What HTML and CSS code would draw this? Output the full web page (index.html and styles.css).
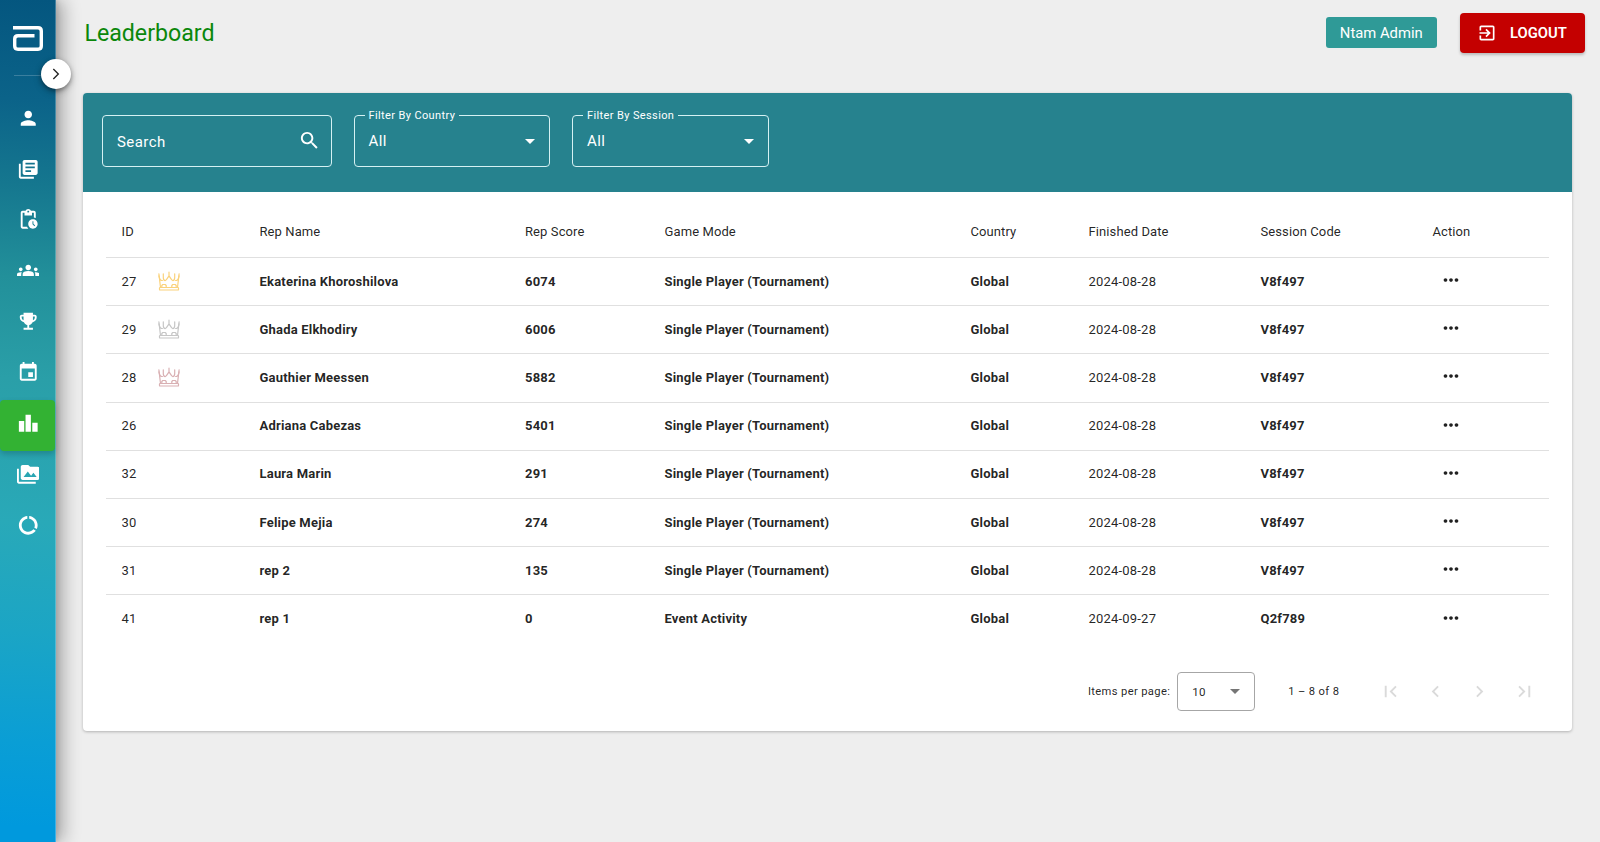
FILE: index.html
```html
<!DOCTYPE html>
<html lang="en">
<head>
<meta charset="utf-8">
<title>Leaderboard</title>
<link rel="stylesheet" href="styles.css">
</head>
<body>
<svg width="0" height="0" class="defs" aria-hidden="true">
  <symbol id="crown" viewBox="0 0 22 20">
    <g fill="none" stroke="currentColor" stroke-width="1.200" stroke-linejoin="round" stroke-linecap="round">
      <rect x="1.500" y="16.500" width="19" height="2.500" rx="0.600"/>
      <path d="M.9 2.800 2.500 16.500M21.100 2.800 19.500 16.500"/>
      <path d="M.9 4.800c.5 3 1.900 4.800 3.500 4.700M21.100 4.800c-.5 3-1.900 4.800-3.500 4.700"/>
      <path d="M5.300 2.800v3.700c0 2 .8 3 1.900 3.100 1.200 0 2.200-2.400 3.800-4.800V1.200v3.600c1.600 2.400 2.600 4.800 3.800 4.800 1.100-.1 1.900-1.100 1.900-3.100V2.800"/>
      <path d="M3.800 16.500v-2l1-1h2.400l1 1v2M18.200 16.500v-2l-1-1h-2.400l-1 1v2"/>
    </g>
  </symbol>
  <symbol id="dots" viewBox="0 0 24 24"><path d="M6 10c-1.100 0-2 .9-2 2s.9 2 2 2 2-.9 2-2-.9-2-2-2zm12 0c-1.100 0-2 .9-2 2s.9 2 2 2 2-.9 2-2-.9-2-2-2zm-6 0c-1.100 0-2 .9-2 2s.9 2 2 2 2-.9 2-2-.9-2-2-2z"/></symbol>
</svg>
<div class="app">
  <aside class="sidebar">
    <svg class="logo" viewBox="0 0 30 25"><path d="M0 1.700H25Q28.300 1.700 28.300 5V20Q28.300 23.200 25 23.200H5Q1.700 23.200 1.700 20V13Q1.700 9.800 5 9.800H21.500" fill="none" stroke="#fff" stroke-width="3.400"/></svg>
    <div class="rule"></div>
    <button class="toggle" aria-label="Expand menu"><svg viewBox="0 0 24 24"><path d="M8 4.500 15.500 12l-7.500 7.500" fill="none" stroke="#222" stroke-width="2"/></svg></button>
    <nav class="nav">
      <a class="item"><svg viewBox="0 0 24 24"><path d="M12 12c2.210 0 4-1.790 4-4s-1.790-4-4-4-4 1.790-4 4 1.790 4 4 4zm0 2c-2.670 0-8 1.340-8 4v2h16v-2c0-2.660-5.330-4-8-4z"/></svg></a>
      <a class="item"><svg viewBox="0 0 24 24"><path d="M4 6H2v14c0 1.100.9 2 2 2h14v-2H4V6zm16-4H8c-1.100 0-2 .9-2 2v12c0 1.100.9 2 2 2h12c1.100 0 2-.9 2-2V4c0-1.100-.9-2-2-2zm-1 9H9V9h10v2zm-4 4H9v-2h6v2zm4-8H9V5h10v2z"/></svg></a>
      <a class="item"><svg viewBox="0 0 24 24"><path d="M17 12c-2.760 0-5 2.240-5 5s2.240 5 5 5 5-2.240 5-5-2.240-5-5-5zm1.650 7.350L16.500 17.200V14h1v2.790l1.850 1.850-.7.710zM18 3h-3.180C14.400 1.840 13.300 1 12 1s-2.400.84-2.820 2H6c-1.100 0-2 .9-2 2v15c0 1.100.9 2 2 2h6.110c-.59-.57-1.070-1.250-1.420-2H6V5h2v3h8V5h2v5.080c.71.1 1.380.31 2 .6V5c0-1.100-.9-2-2-2zm-6 2c-.55 0-1-.45-1-1s.45-1 1-1 1 .45 1 1-.45 1-1 1z"/></svg></a>
      <a class="item"><svg viewBox="0 0 24 24"><path d="M12 12.750c1.630 0 3.070.39 4.240.9 1.080.48 1.760 1.560 1.760 2.730V18H6v-1.610c0-1.180.68-2.260 1.760-2.730 1.170-.52 2.610-.91 4.240-.91zM4 13c1.100 0 2-.9 2-2s-.9-2-2-2-2 .9-2 2 .9 2 2 2zm1.130 1.100c-.37-.06-.74-.1-1.130-.1-.99 0-1.930.21-2.780.58C.48 14.900 0 15.620 0 16.430V18h4.500v-1.610c0-.83.23-1.610.63-2.290zM20 13c1.100 0 2-.9 2-2s-.9-2-2-2-2 .9-2 2 .9 2 2 2zm4 3.430c0-.81-.48-1.530-1.220-1.850-.85-.37-1.790-.58-2.780-.58-.39 0-.76.04-1.130.1.400.68.63 1.460.63 2.290V18H24v-1.570zM12 6c1.660 0 3 1.340 3 3s-1.340 3-3 3-3-1.340-3-3 1.340-3 3-3z"/></svg></a>
      <a class="item"><svg viewBox="0 0 24 24"><path d="M19 5h-2V3H7v2H5c-1.100 0-2 .9-2 2v1c0 2.550 1.920 4.630 4.390 4.940.63 1.500 1.980 2.630 3.610 2.960V19H7v2h10v-2h-4v-3.100c1.630-.33 2.980-1.460 3.610-2.960C19.080 12.630 21 10.550 21 8V7c0-1.100-.9-2-2-2zM5 8V7h2v3.820C5.840 10.400 5 9.300 5 8zm14 0c0 1.300-.84 2.400-2 2.820V7h2v1z"/></svg></a>
      <a class="item"><svg viewBox="0 0 24 24"><path d="M17 12h-5v5h5v-5zM16 1v2H8V1H6v2H5c-1.110 0-1.990.9-1.990 2L3 19c0 1.100.89 2 2 2h14c1.100 0 2-.9 2-2V5c0-1.100-.9-2-2-2h-1V1h-2zm3 18H5V8h14v11z"/></svg></a>
      <a class="item active"><svg viewBox="0 0 24 24"><path d="M2 9.500h5.700V21H2zM9.100 3h5.700v18H9.100zM16.300 11.500H22V21h-5.700z"/></svg></a>
      <a class="item"><svg viewBox="0 0 24 24"><path d="M2 6H0v14c0 1.100.9 2 2 2h18v-2H2V6zm20-2h-8l-2-2H6c-1.100 0-1.990.9-1.990 2L4 16c0 1.100.9 2 2 2h16c1.100 0 2-.9 2-2V6c0-1.100-.9-2-2-2zM7 15l4.500-6 3.500 4.510 2.500-3.010L21 15H7z"/></svg></a>
      <a class="item"><svg viewBox="0 0 24 24"><path d="M13 2.050v3.030c3.390.49 6 3.390 6 6.920 0 .9-.18 1.750-.48 2.540l2.600 1.530c.56-1.240.88-2.620.88-4.070 0-5.180-3.950-9.450-9-9.950zM12 19c-3.870 0-7-3.130-7-7 0-3.530 2.610-6.430 6-6.920V2.050c-5.060.5-9 4.760-9 9.950 0 5.520 4.470 10 9.990 10 3.310 0 6.240-1.610 8.060-4.090l-2.600-1.530C16.170 17.980 14.210 19 12 19z"/></svg></a>
    </nav>
  </aside>
  <main class="main">
    <header class="topbar">
      <h1 class="title">Leaderboard</h1>
      <div class="user">Ntam Admin</div>
      <button class="logout"><svg viewBox="0 0 24 24"><path d="M10.090 15.590 11.500 17l5-5-5-5-1.410 1.410L12.670 11H3v2h9.670l-2.580 2.590zM19 3H5c-1.110 0-2 .9-2 2v4h2V5h14v14H5v-4H3v4c0 1.100.89 2 2 2h14c1.100 0 2-.9 2-2V5c0-1.100-.9-2-2-2z"/></svg><span>LOGOUT</span></button>
    </header>
    <section class="card">
      <div class="filters">
        <div class="field search"><span>Search</span><svg viewBox="0 0 24 24"><path d="M15.500 14h-.79l-.28-.27C15.410 12.590 16 11.110 16 9.500 16 5.910 13.090 3 9.500 3S3 5.910 3 9.500 5.910 16 9.500 16c1.610 0 3.090-.59 4.230-1.570l.27.28v.79l5 4.990L20.490 19l-4.990-5zm-6 0C7.010 14 5 11.990 5 9.500S7.010 5 9.500 5 14 7.010 14 9.500 11.990 14 9.500 14z"/></svg></div>
        <fieldset class="field select"><legend>Filter By Country</legend><div class="value"><span>All</span><i class="caret"></i></div></fieldset>
        <fieldset class="field select"><legend>Filter By Session</legend><div class="value"><span>All</span><i class="caret"></i></div></fieldset>
      </div>
      <div class="table">
        <div class="row head"><div>ID</div><div></div><div>Rep Name</div><div>Rep Score</div><div>Game Mode</div><div>Country</div><div>Finished Date</div><div>Session Code</div><div>Action</div></div>
        <div class="row"><div>27</div><div><svg class="crown gold"><use href="#crown"/></svg></div><b>Ekaterina Khoroshilova</b><b>6074</b><b>Single Player (Tournament)</b><b>Global</b><div>2024-08-28</div><b>V8f497</b><div class="act"><svg><use href="#dots"/></svg></div></div>
        <div class="row"><div>29</div><div><svg class="crown silver"><use href="#crown"/></svg></div><b>Ghada Elkhodiry</b><b>6006</b><b>Single Player (Tournament)</b><b>Global</b><div>2024-08-28</div><b>V8f497</b><div class="act"><svg><use href="#dots"/></svg></div></div>
        <div class="row"><div>28</div><div><svg class="crown bronze"><use href="#crown"/></svg></div><b>Gauthier Meessen</b><b>5882</b><b>Single Player (Tournament)</b><b>Global</b><div>2024-08-28</div><b>V8f497</b><div class="act"><svg><use href="#dots"/></svg></div></div>
        <div class="row"><div>26</div><div></div><b>Adriana Cabezas</b><b>5401</b><b>Single Player (Tournament)</b><b>Global</b><div>2024-08-28</div><b>V8f497</b><div class="act"><svg><use href="#dots"/></svg></div></div>
        <div class="row"><div>32</div><div></div><b>Laura Marin</b><b>291</b><b>Single Player (Tournament)</b><b>Global</b><div>2024-08-28</div><b>V8f497</b><div class="act"><svg><use href="#dots"/></svg></div></div>
        <div class="row"><div>30</div><div></div><b>Felipe Mejia</b><b>274</b><b>Single Player (Tournament)</b><b>Global</b><div>2024-08-28</div><b>V8f497</b><div class="act"><svg><use href="#dots"/></svg></div></div>
        <div class="row"><div>31</div><div></div><b>rep 2</b><b>135</b><b>Single Player (Tournament)</b><b>Global</b><div>2024-08-28</div><b>V8f497</b><div class="act"><svg><use href="#dots"/></svg></div></div>
        <div class="row"><div>41</div><div></div><b>rep 1</b><b>0</b><b>Event Activity</b><b>Global</b><div>2024-09-27</div><b>Q2f789</b><div class="act"><svg><use href="#dots"/></svg></div></div>
      </div>
      <footer class="pager">
        <span class="label">Items per page:</span>
        <div class="size"><span>10</span><i class="caret"></i></div>
        <span class="range">1 – 8 of 8</span>
        <div class="pages">
          <svg viewBox="0 0 24 24"><path d="M18.410 16.590 13.820 12l4.590-4.590L17 6l-6 6 6 6zM6 6h2v12H6z"/></svg>
          <svg viewBox="0 0 24 24"><path d="M15.410 7.410 14 6l-6 6 6 6 1.410-1.410L10.830 12z"/></svg>
          <svg viewBox="0 0 24 24"><path d="M10 6 8.590 7.410 13.170 12l-4.580 4.590L10 18l6-6z"/></svg>
          <svg viewBox="0 0 24 24"><path d="M5.590 7.410 10.180 12l-4.590 4.590L7 18l6-6-6-6zM16 6h2v12h-2z"/></svg>
        </div>
      </footer>
    </section>
  </main>
</div>
</body>
</html>
```
FILE: styles.css
```css
* { box-sizing: border-box; }
body {
  margin: 0;
  background: #eee;
  color: rgba(0, 0, 0, .87);
  font-family: Roboto, "Liberation Sans", sans-serif;
  font-size: 13px;
  overflow: hidden;
}
svg { display: block; fill: currentColor; flex: none; }
button { font: inherit; border: 0; padding: 0; }
.defs { position: absolute; }
.app { display: flex; height: 842px; }

/* Sidebar */
.sidebar {
  position: relative;
  width: 56px;
  flex: none;
  color: #fff;
  background: linear-gradient(183deg, #04567f 0%, #0b6389 12%, #15778f 22%, #22909a 33%, #2a9fa8 45%, #29a9b8 62%, #1ba5c5 75%, #0a9ed5 88%, #0099dd 98%);
  border-right: 1px solid rgba(255, 255, 255, .25);
  box-shadow: 7px 0 18px rgba(0, 0, 0, .3), 2px 0 5px rgba(0, 0, 0, .1);
}
.logo { width: 30px; height: 25px; margin: 26px 0 0 13px; }
.rule { height: 1px; margin: 24px 0 0 14px; background: rgba(255, 255, 255, .2); }
.toggle {
  position: absolute;
  left: 41px;
  top: 59px;
  width: 30px;
  height: 30px;
  border-radius: 50%;
  background: #fff;
  display: grid;
  place-items: center;
  box-shadow: 0 2px 4px rgba(0, 0, 0, .35), 0 3px 8px rgba(0, 0, 0, .2);
}
.toggle svg { width: 16px; height: 16px; }
.nav { margin-top: 18.500px; }
.item { display: grid; place-items: center; height: 50.900px; padding: 0 0 4px 1px; }
.item svg { width: 22.500px; height: 22.500px; }
.active {
  background: #33b233;
  border-radius: 4px;
  box-shadow: 0 3px 6px rgba(0, 0, 0, .2);
}

/* Header */
.main { flex: 1; padding: 0 28px 0 27px; min-width: 0; }
.topbar { display: flex; align-items: center; height: 93px; padding-bottom: 28px; margin-right: -13px; }
.title { flex: 1; margin: 0 0 0 1.400px; font-size: 23.200px; font-weight: 400; color: #0a870a; }
.user {
  width: 110.500px;
  height: 31px;
  border-radius: 3px;
  background: #2f9a97;
  color: #fff;
  font-size: 14.800px;
  line-height: 32px;
  text-align: center;
}
.logout {
  display: flex;
  align-items: center;
  gap: 13px;
  width: 125px;
  height: 40px;
  margin-left: 23.500px;
  padding-left: 17px;
  border-radius: 4px;
  background: #c40000;
  color: #fff;
  font-size: 14.800px;
  font-weight: 600;
  box-shadow: 0 2px 3px rgba(0, 0, 0, .22);
}
.logout svg { width: 20px; height: 20px; }

/* Card */
.card {
  height: 638px;
  border-radius: 4px;
  background: #fff;
  box-shadow: 0 1px 3px rgba(0, 0, 0, .25);
  overflow: hidden;
}
.filters {
  display: flex;
  gap: 22px;
  height: 99px;
  padding: 22px 18.500px 0;
  background: #26828e;
  color: #fff;
}
.field {
  height: 52px;
  margin: 0;
  border: 1px solid #d5f1f3;
  border-radius: 4px;
  font-size: 15px;
  letter-spacing: .45px;
}
.search { display: flex; align-items: center; width: 230px; justify-content: space-between; padding: 2px 10px 0 14.500px; }
.search svg { width: 23px; height: 23px; margin-top: -4px; }
.select { width: 196.500px; height: 59px; margin-top: -7px; padding: 0 14px; }
.select legend { padding: 1px 4px 0; margin-left: -4px; font-size: 11px; line-height: 13px; letter-spacing: .38px; }
.value { display: flex; align-items: center; justify-content: space-between; height: 38px; }
.caret { border: 5px solid transparent; border-top-color: currentColor; border-bottom: 0; }

/* Table */
.table { padding: 14px 23px 0; letter-spacing: .2px; }
.row {
  display: grid;
  grid-template-columns: 36.500px 101.500px 265.500px 139.500px 306px 118px 172px 172px 1fr;
  align-items: center;
  height: 48.200px;
  padding: 0 0 1px 15.500px;
  border-bottom: 1px solid #e0e0e0;
}
.row:last-child { border-bottom: 0; }
.head { height: 52px; padding-bottom: 0; letter-spacing: .1px; }
.row b { font-weight: 700; }
.crown { width: 22px; height: 20px; }
.gold { color: #fad27c; }
.silver { color: #c6c6c6; }
.bronze { color: #d9b0b3; }
.act svg { width: 22px; height: 22px; margin: -2px 0 0 7px; }

/* Paginator */
.pager {
  display: flex;
  align-items: center;
  justify-content: flex-end;
  height: 52px;
  margin-top: 22px;
  padding-right: 36.500px;
  font-size: 11.200px;
  letter-spacing: .35px;
}
.size {
  display: flex;
  align-items: center;
  justify-content: space-between;
  width: 78px;
  height: 39px;
  margin: 0 33px 0 7px;
  padding: 0 14px;
  border: 1px solid #a6a6a6;
  border-radius: 4px;
}
.size span { font-size: 11.600px; }
.size .caret { color: #757575; }
.pages { display: flex; gap: 21.400px; margin-left: 40px; color: #dadada; }
.pages svg { width: 23px; height: 23px; }
```
